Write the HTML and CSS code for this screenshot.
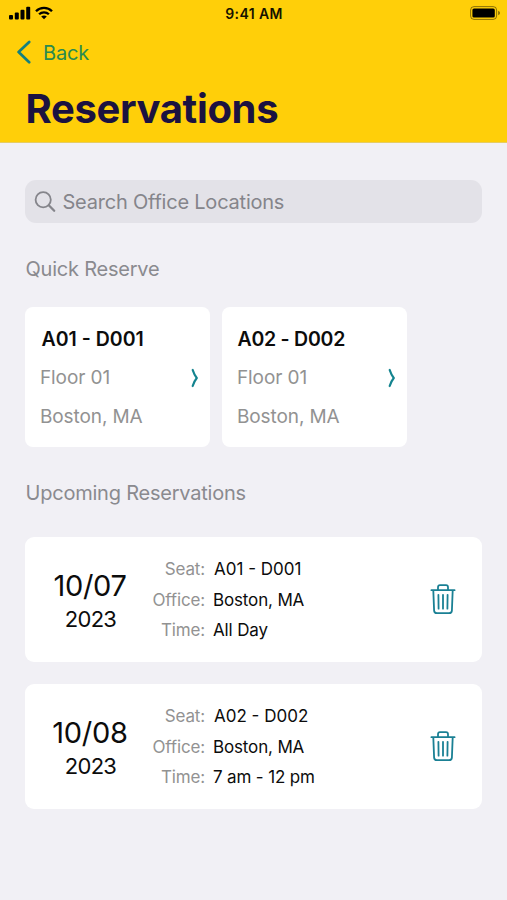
FILE: index.html
```html
<!DOCTYPE html>
<html lang="en">
<head>
<meta charset="utf-8">
<title>Reservations</title>
<link rel="stylesheet" href="styles.css">
</head>
<body>
<header class="header">
  <div class="status">
    <div class="status-left">
      <svg width="22" height="14" viewBox="0 0 22 14"><rect x="0" y="9" width="4" height="4.500" rx="1"/><rect x="5.800" y="6.500" width="4" height="7" rx="1"/><rect x="11.500" y="3.700" width="4" height="9.800" rx="1"/><rect x="17.200" y="0.700" width="4" height="12.800" rx="1"/></svg>
      <svg width="18" height="14" viewBox="0 0 18 14"><g fill="none" stroke="#000" stroke-width="2.300"><path d="M1 5.200C5.400 .7 12.600 .7 17 5.200"/><path d="M4.100 8.300C6.800 5.600 11.200 5.600 13.900 8.300"/></g><path d="M6.200 10.500C7.800 9 10.200 9 11.800 10.500L9 13.300Z"/></svg>
    </div>
    <time class="clock">9:41 AM</time>
    <svg class="battery" width="31" height="14" viewBox="0 0 31 14"><rect x=".6" y=".6" width="26" height="12.800" rx="3.400" fill="none" stroke="#000" stroke-opacity=".45" stroke-width="1"/><rect x="2.400" y="2.400" width="22.400" height="9.200" rx="1.600"/><path d="M28.200 4.800Q30 5.600 30 7T28.200 9.200Z" fill-opacity=".5"/></svg>
  </div>
  <a class="back"><svg width="16" height="24" viewBox="0 0 16 24"><path d="M14.200 2L3.600 12L14.200 22.200" fill="none" stroke="#14807d" stroke-width="2.700" stroke-linecap="round" stroke-linejoin="round"/></svg><span>Back</span></a>
  <h1 class="title">Reservations</h1>
</header>
<main class="main">
  <div class="search"><svg width="22" height="22" viewBox="0 0 22 22"><g fill="none" stroke="#85858b" stroke-linecap="round"><circle cx="9.200" cy="8.700" r="7.600" stroke-width="1.800"/><path d="M14.800 14.300L20.200 19.700" stroke-width="2.300"/></g></svg><span>Search Office Locations</span></div>
  <h2 class="heading quick-heading">Quick Reserve</h2>
  <div class="quick">
    <article class="desk">
      <div><h3>A01 - D001</h3><p class="floor">Floor 01</p><p class="city">Boston, MA</p></div>
      <svg width="8" height="20" viewBox="0 0 8 20"><path d="M1.700 2Q3.300 7 5.800 10Q3.300 13 1.700 18" fill="none" stroke="#14848f" stroke-width="2.200" stroke-linecap="round" stroke-linejoin="round"/></svg>
    </article>
    <article class="desk">
      <div><h3 class="wide">A02 - D002</h3><p class="floor">Floor 01</p><p class="city">Boston, MA</p></div>
      <svg width="8" height="20" viewBox="0 0 8 20"><path d="M1.700 2Q3.300 7 5.800 10Q3.300 13 1.700 18" fill="none" stroke="#14848f" stroke-width="2.200" stroke-linecap="round" stroke-linejoin="round"/></svg>
    </article>
  </div>
  <h2 class="heading upcoming-heading">Upcoming Reservations</h2>
  <article class="booking">
    <div class="date"><div class="day">10/07</div><div class="year">2023</div></div>
    <dl><dt>Seat:</dt><dd class="seat">A01 - D001</dd><dt>Office:</dt><dd>Boston, MA</dd><dt>Time:</dt><dd>All Day</dd></dl>
    <svg class="trash" width="26" height="32" viewBox="0 0 26 32"><g fill="none" stroke="#1a8094" stroke-width="1.800" stroke-linecap="round" stroke-linejoin="round"><path d="M1.400 7.200H24.600M8 7V4.200Q8 2.200 10 2.200H16Q18 2.200 18 4.200V7M3.300 7.400L4.100 27.600Q4.300 30.200 6.900 30.200H19.100Q21.700 30.200 21.900 27.600L22.700 7.400"/><path d="M8.400 11.800L8.600 25.700M13 11.800V25.700M17.600 11.800L17.400 25.700"/></g></svg>
  </article>
  <article class="booking">
    <div class="date"><div class="day">10/08</div><div class="year">2023</div></div>
    <dl><dt>Seat:</dt><dd class="seat">A02 - D002</dd><dt>Office:</dt><dd>Boston, MA</dd><dt>Time:</dt><dd class="hours">7 am - 12 pm</dd></dl>
    <svg class="trash" width="26" height="32" viewBox="0 0 26 32"><g fill="none" stroke="#1a8094" stroke-width="1.800" stroke-linecap="round" stroke-linejoin="round"><path d="M1.400 7.200H24.600M8 7V4.200Q8 2.200 10 2.200H16Q18 2.200 18 4.200V7M3.300 7.400L4.100 27.600Q4.300 30.200 6.900 30.200H19.100Q21.700 30.200 21.900 27.600L22.700 7.400"/><path d="M8.400 11.800L8.600 25.700M13 11.800V25.700M17.600 11.800L17.400 25.700"/></g></svg>
  </article>
</main>
</body>
</html>
```
FILE: styles.css
```css
* { box-sizing: border-box; margin: 0; padding: 0; }
body { width: 507px; height: 900px; overflow: hidden; background: #f1f0f5; font-family: Inter, sans-serif; color: #0c0c0c; }
svg { display: block; flex: none; }
.header { height: 143px; background: #ffcf09; border-bottom: 1px solid #e6cc62; }
.status { height: 28px; display: grid; grid-template-columns: 1fr auto 1fr; align-items: center; padding: 0 6px 0 9px; }
.status-left { display: flex; gap: 4px; margin-top: -2px; }
.clock { font-size: 14px; line-height: 18px; margin: 0 2px 0 0; font-weight: 600; letter-spacing: .4px; color: #151200; }
.battery { justify-self: end; margin-top: -2px; }
.back { display: flex; align-items: center; height: 30px; margin-top: 9px; padding-left: 15px; gap: 12px; color: #2a8a50; font-size: 20px; letter-spacing: -.2px; }
.back span { padding-top: 1px; }
.title { margin: 17px 0 0 25.500px; font-size: 40px; line-height: 50px; font-weight: 700; letter-spacing: -.35px; color: #1b1240; }
.main { padding: 37px 25px 0; }
.search { height: 43px; border-radius: 11px; background: #e3e2e8; display: flex; align-items: center; gap: 6.500px; padding-left: 9px; color: #85858b; font-size: 20px; letter-spacing: -.22px; }
.heading { font-size: 20px; line-height: 26px; font-weight: 400; letter-spacing: -.22px; color: #8a8a8f; padding-left: .5px; }
.quick-heading { margin-top: 33px; }
.quick { display: flex; gap: 12px; margin-top: 25px; }
.desk { width: 185px; height: 140px; border-radius: 8px; background: #fff; display: flex; justify-content: space-between; align-items: center; padding: 2px 11px 0 15px; }
.desk h3 { font-size: 19.500px; line-height: 38px; font-weight: 600; letter-spacing: 0; padding-left: 1.500px; }
.desk .wide { letter-spacing: -.25px; padding-left: .5px; }
.desk p { font-size: 19px; line-height: 38.500px; letter-spacing: -.1px; color: #929292; }
.desk .floor { line-height: 40px; }
.upcoming-heading { margin-top: 33px; }
.booking { height: 125px; border-radius: 9px; background: #fff; display: grid; grid-template-columns: 130px 50px 1fr 26px; align-items: center; padding-right: 26px; margin-top: 22px; }
.upcoming-heading + .booking { margin-top: 31px; }
.date { text-align: center; padding-top: 2px; }
.day { font-size: 29px; line-height: 36px; letter-spacing: -.3px; }
.year { font-size: 22px; line-height: 30px; letter-spacing: -.7px; padding-left: 1px; }
.booking dl { grid-column: 2 / 4; display: grid; grid-template-columns: 50px 1fr; column-gap: 8px; line-height: 30.700px; font-size: 17px; letter-spacing: -.15px; padding-top: 1px; }
.booking dt { justify-self: end; white-space: nowrap; color: #929292; }
.booking .seat { padding-left: 1px; letter-spacing: 0; }
.trash { margin-top: -2px; }
```
